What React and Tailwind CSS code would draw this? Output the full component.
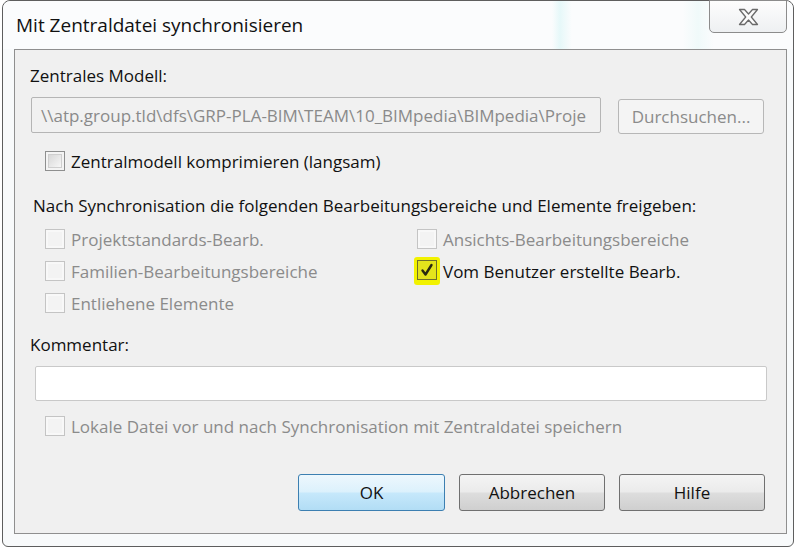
import React from 'react'

const CheckBox = ({ label, disabled, checked }) => {
    return (
        <div className='flex items-center h-full'>
            {checked ? (
                <span className='-ml-[3px] -mr-[3px] p-[3px] pb-[5px] bg-[#f2f200] rounded-[3px]'>
                    <span className='flex items-center justify-center w-[20px] h-[20px] border border-[#6f6f2a] bg-[#e4e41c]'>
                        <svg width="16" height="16" viewBox="0 0 16 16">
                            <path d="M3.5 8.5 L6.5 12.5 L12.5 3" fill="none" stroke="#2a2a10" strokeWidth="2.4" strokeLinecap="round" strokeLinejoin="round" />
                        </svg>
                    </span>
                </span>
            ) : (
                <span className={`w-[20px] h-[20px] border p-[2px] ${disabled ? 'border-[#c4c4c4] bg-[#f8f8f8]' : 'border-[#8e8f8f] bg-[#f4f4f4]'}`}>
                    <span className={`block w-full h-full ${disabled ? 'bg-[#f3f3f3]' : 'border border-[#cfcfcf] bg-linear-to-br from-[#d8d8d8] to-[#f7f7f7]'}`} />
                </span>
            )}
            <span className={`ml-[6px] ${disabled ? 'text-[#8b8b8b]' : 'text-[#111111]'}`}>{label}</span>
        </div>
    )
}

const App = () => {
    return (
        <div className="w-[800px] h-[549px] bg-white overflow-hidden font-['Open_Sans','Noto_Sans',sans-serif] text-[17px] leading-none">
            {/* Window frame */}
            <div className='ml-[2px] w-[792px] h-[547px] flex flex-col border border-[#5e5e5e] rounded-t-[8px] rounded-b-[6px] bg-[#f8fafb]'>
                {/* Title bar */}
                <div className='h-[48px] flex items-start justify-between rounded-t-[8px] bg-[linear-gradient(to_right,#fbfcfd_0%,#fbfcfd_69.5%,#e6f8f9_70.5%,#fbfcfd_72%,#fbfcfd_86%,#f0fafa_88%,#fbfcfd_90%)]'>
                    <p className='ml-[13px] mt-[15px] text-[19px] text-[#111111]'>Mit Zentraldatei synchronisieren</p>
                    <div className='mr-[6px] -mt-px w-[78px] h-[33px] flex items-center justify-center border border-[#8c8c8c] rounded-b-[5px] bg-linear-to-b from-[#fdfdfd] to-[#eef0f2]'>
                        <svg width="21" height="18" viewBox="0 0 21 18">
                            <polygon points="1.5,1.5 6.5,1.5 10.5,6 14.5,1.5 19.5,1.5 13.3,9 19.5,16.5 14.5,16.5 10.5,12 6.5,16.5 1.5,16.5 7.7,9" fill="#fbfbfb" stroke="#6a6a6a" strokeWidth="1.3" strokeLinejoin="round" />
                        </svg>
                    </div>
                </div>

                {/* Client area */}
                <div className='ml-[11px] mr-[6px] h-[485px] border border-[#8f8f8f] bg-[#f0f0f0] flex flex-col'>
                    <div className='mt-[12px] h-[26px] flex items-center pl-[15px] text-[#111111]'>Zentrales Modell:</div>

                    <div className='mt-[9px] h-[37px] flex items-start'>
                        <div className='ml-[16px] w-[570px] h-[36px] border border-[#b5b5b5] rounded-[2px] bg-[#f1f1f1] flex items-center pl-[9px] overflow-hidden whitespace-nowrap text-[#8a8a8a]'>
                            \\atp.group.tld\dfs\GRP-PLA-BIM\TEAM\10_BIMpedia\BIMpedia\Proje
                        </div>
                        <div className='ml-[17px] mt-[2px] w-[146px] h-[35px] border border-[#b7b7b7] rounded-[3px] bg-[#f4f4f4] flex items-center justify-center text-[#8b8b8b]'>
                            Durchsuchen...
                        </div>
                    </div>

                    <div className='mt-[16px] h-[22px] pl-[30px]'>
                        <CheckBox label='Zentralmodell komprimieren (langsam)' />
                    </div>

                    <div className='mt-[21px] h-[24px] flex items-center pl-[18px] text-[#111111]'>
                        Nach Synchronisation die folgenden Bearbeitungsbereiche und Elemente freigeben:
                    </div>

                    <div className='mt-[6px] pl-[30px] grid grid-cols-[372px_1fr] auto-rows-[32px]'>
                        <CheckBox label='Projektstandards-Bearb.' disabled />
                        <CheckBox label='Ansichts-Bearbeitungsbereiche' disabled />
                        <CheckBox label='Familien-Bearbeitungsbereiche' disabled />
                        <CheckBox label='Vom Benutzer erstellte Bearb.' checked />
                        <CheckBox label='Entliehene Elemente' disabled />
                    </div>

                    <div className='mt-[13px] h-[24px] flex items-center pl-[15px] text-[#111111]'>Kommentar:</div>

                    <div className='mt-[10px] ml-[20px] w-[732px] h-[35px] border border-[#c9c9c9] rounded-[2px] bg-white'></div>

                    <div className='mt-[14px] h-[22px] pl-[30px]'>
                        <CheckBox label='Lokale Datei vor und nach Synchronisation mit Zentraldatei speichern' disabled />
                    </div>

                    {/* Buttons */}
                    <div className='mt-[37px] pr-[21px] flex justify-end gap-[14px]'>
                        <button className='w-[147px] h-[37px] border border-[#3c7fb1] rounded-[3px] bg-[linear-gradient(to_bottom,#edf7fd_0%,#dcf1fc_48%,#c6e8fb_52%,#b2ddf5_100%)] text-[#111111]'>OK</button>
                        <button className='w-[146px] h-[37px] border border-[#707070] rounded-[3px] bg-[linear-gradient(to_bottom,#f4f4f4_0%,#ebebeb_48%,#dddddd_52%,#cfcfcf_100%)] text-[#111111]'>Abbrechen</button>
                        <button className='w-[146px] h-[37px] border border-[#707070] rounded-[3px] bg-[linear-gradient(to_bottom,#f4f4f4_0%,#ebebeb_48%,#dddddd_52%,#cfcfcf_100%)] text-[#111111]'>Hilfe</button>
                    </div>
                </div>
            </div>
        </div>
    )
}

export default App
